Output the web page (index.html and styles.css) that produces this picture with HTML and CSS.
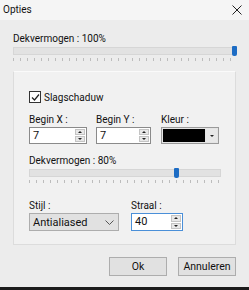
FILE: index.html
```html
<!DOCTYPE html>
<html lang="nl">
<head>
    <meta charset="utf-8">
    <title>Opties</title>
    <link rel="stylesheet" href="styles.css">
</head>
<body>
<div class="dialog">
    <div class="titlebar">
        <span>Opties</span>
        <svg class="close" width="10" height="10" viewBox="0 0 10 10">
            <path d="M0.5 0.5 L9.5 9.5 M9.5 0.5 L0.5 9.5" stroke="#222" stroke-width="1" fill="none"/>
        </svg>
    </div>

    <div class="content">
        <div class="caption">Dekvermogen : 100%</div>
        <div class="slider">
            <div class="track"></div>
            <div class="thumb" style="left: 219px"></div>
            <div class="ticks"></div>
        </div>

        <div class="panel">
            <label class="check">
                <span class="box">
                    <svg width="9" height="9" viewBox="0 0 9 9">
                        <path d="M1 4.5 L3.5 7 L8 1.5" stroke="#222" stroke-width="1.2" fill="none"/>
                    </svg>
                </span>
                Slagschaduw
            </label>

            <div class="fields">
                <div class="field">
                    <div class="label">Begin X :</div>
                    <div class="spin w-x">
                        <span class="value">7</span>
                        <span class="arrows"><span class="up"></span><span class="down"></span></span>
                    </div>
                </div>
                <div class="field">
                    <div class="label">Begin Y :</div>
                    <div class="spin w-y">
                        <span class="value">7</span>
                        <span class="arrows"><span class="up"></span><span class="down"></span></span>
                    </div>
                </div>
                <div class="field">
                    <div class="label">Kleur :</div>
                    <div class="color">
                        <span class="swatch"></span>
                        <span class="drop"><span class="down"></span></span>
                    </div>
                </div>
            </div>

            <div class="caption inner">Dekvermogen : 80%</div>
            <div class="slider short">
                <div class="track"></div>
                <div class="thumb" style="left: 145px"></div>
                <div class="ticks"></div>
            </div>

            <div class="fields bottom">
                <div class="field">
                    <div class="label">Stijl :</div>
                    <div class="select">
                        <span>Antialiased</span>
                        <svg width="9" height="5" viewBox="0 0 9 5">
                            <path d="M0.5 0.5 L4.5 4.5 L8.5 0.5" stroke="#555" stroke-width="1" fill="none"/>
                        </svg>
                    </div>
                </div>
                <div class="field">
                    <div class="label">Straal :</div>
                    <div class="spin w-r focus">
                        <span class="value">40</span>
                        <span class="arrows"><span class="up"></span><span class="down"></span></span>
                    </div>
                </div>
            </div>
        </div>

        <div class="buttons">
            <button>Ok</button>
            <button>Annuleren</button>
        </div>
    </div>
    <div class="taskbar"></div>
</div>
</body>
</html>
```

FILE: styles.css
```css
body {
    margin: 0;
    font-family: Roboto, "Liberation Sans", sans-serif;
    font-size: 10px;
    color: #111;
}

.dialog {
    width: 249px;
    height: 290px;
    background-color: #ececec;
    display: flex;
    flex-direction: column;
}

.titlebar {
    height: 20px;
    background-color: #f5f5f5;
    display: flex;
    align-items: center;
    justify-content: space-between;
    padding: 0 7px 0 3px;
    box-sizing: border-box;
}

.titlebar span {
    line-height: 14px;
}

.content {
    flex: 1;
    padding: 0 13px;
}

.caption {
    line-height: 14px;
    margin-top: 12px;
    height: 14px;
}

.caption.inner {
    margin-top: 10px;
}

.slider {
    position: relative;
    height: 16px;
    width: 223px;
}

.slider.short {
    width: 192px;
}

.track {
    position: absolute;
    top: 1px;
    left: 0;
    right: 0;
    height: 6px;
    background-color: #e2e2e2;
    border: 1px solid #d6d6d6;
}

.thumb {
    position: absolute;
    top: 0;
    width: 5px;
    height: 10px;
    background-color: #1d6cc4;
    border-radius: 1px 1px 2px 2px;
}

.ticks {
    position: absolute;
    top: 12px;
    left: 0;
    right: 0;
    height: 3px;
    background-image: repeating-linear-gradient(to right, #bcbcbc 0, #bcbcbc 1px, transparent 1px, transparent 7px);
}

.panel {
    margin-top: 9px;
    height: 174px;
    box-sizing: border-box;
    border: 1px solid #dcdcdc;
    border-top-color: #fafafa;
    background-color: #f1f1f1;
    padding: 0 15px;
}

.check {
    display: flex;
    align-items: center;
    gap: 3px;
    margin-top: 19px;
    height: 12px;
}

.box {
    width: 10px;
    height: 10px;
    border: 1px solid #333;
    background-color: #fff;
    display: flex;
    align-items: center;
    justify-content: center;
}

.fields {
    display: flex;
    margin-top: 10px;
}

.fields .field:nth-child(1) {
    width: 67px;
}

.fields .field:nth-child(2) {
    width: 65px;
}

.fields.bottom {
    margin-top: 15px;
}

.fields.bottom .field:nth-child(1) {
    width: 102px;
}

.label {
    line-height: 14px;
    height: 14px;
}

.spin {
    height: 17px;
    box-sizing: border-box;
    border: 1px solid #8a8a8a;
    background-color: #fff;
    display: flex;
    justify-content: space-between;
}

.spin.w-x {
    width: 58px;
}

.spin.w-y {
    width: 55px;
}

.spin.w-r {
    width: 52px;
    height: 18px;
}

.spin.focus {
    border-color: #4a8fd8;
}

.value {
    line-height: 15px;
    padding-left: 3px;
    font-size: 11px;
}

.arrows {
    width: 10px;
    display: flex;
    flex-direction: column;
    gap: 1px;
    padding: 1px 1px 1px 0;
}

.arrows span,
.drop {
    flex: 1;
    background-color: #e8e8e8;
    border: 1px solid #c4c4c4;
    display: flex;
    align-items: center;
    justify-content: center;
}

.up::before,
.down::before {
    content: "";
    display: block;
    border-left: 2px solid transparent;
    border-right: 2px solid transparent;
}

.up::before {
    border-bottom: 2px solid #222;
}

.down::before {
    border-top: 2px solid #222;
}

.color {
    width: 58px;
    height: 17px;
    box-sizing: border-box;
    border: 1px solid #9a9a9a;
    background-color: #e4e4e4;
    display: flex;
    padding: 1px;
    gap: 1px;
}

.swatch {
    flex: 1;
    background-color: #000;
}

.drop {
    flex: 0 0 11px;
    border: none;
}

.select {
    width: 90px;
    height: 18px;
    box-sizing: border-box;
    border: 1px solid #adadad;
    background-color: #e1e1e1;
    display: flex;
    align-items: center;
    justify-content: space-between;
    padding: 0 4px 0 3px;
    font-size: 11px;
}

.buttons {
    display: flex;
    justify-content: flex-end;
    gap: 11px;
    margin-top: 12px;
}

.buttons button {
    width: 58px;
    height: 19px;
    font-family: Roboto, "Liberation Sans", sans-serif;
    font-size: 10.5px;
    color: #111;
    background-color: #e1e1e1;
    border: 1px solid #adadad;
    padding: 0;
    line-height: 14px;
}

.taskbar {
    height: 3px;
    background-color: #1c1c1c;
}
```
